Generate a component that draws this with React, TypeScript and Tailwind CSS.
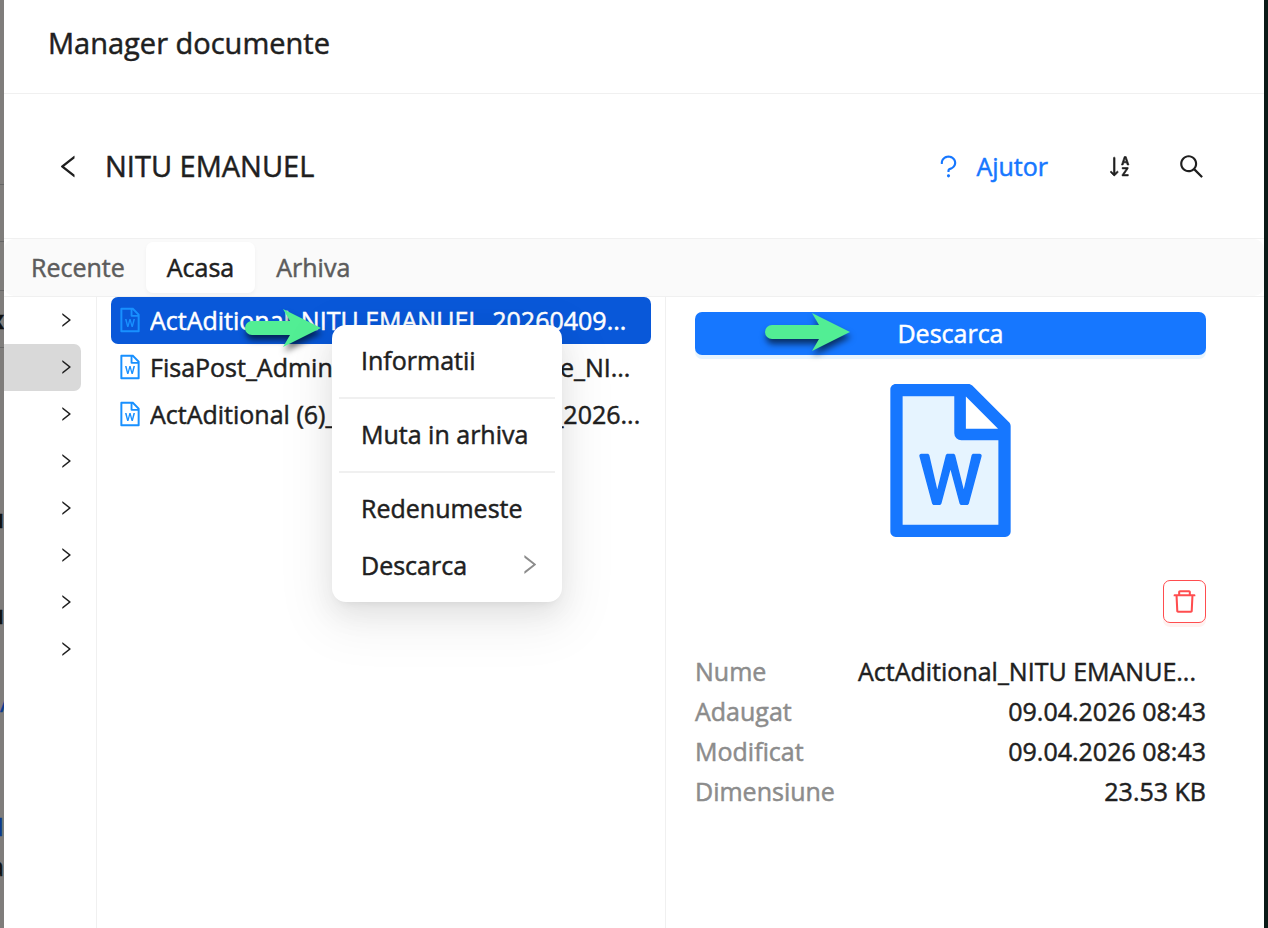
import { useState } from "react";
import {
  AiOutlineDelete,
  AiOutlineFileWord,
  AiOutlineLeft,
  AiOutlineQuestion,
  AiOutlineRight,
  AiOutlineSearch,
  AiTwotoneFileWord,
} from "react-icons/ai";
import { BsSortAlphaDown } from "react-icons/bs";

const tabs = ["Recente", "Acasa", "Arhiva"];

const files = [
  "ActAditional_NITU EMANUEL_20260409...",
  "FisaPost_Administrator baza de date_NI...",
  "ActAditional (6)_NITU EMANUEL (2)_2026...",
];

const folders = [0, 1, 2, 3, 4, 5, 6, 7];

const details = [
  { label: "Nume", value: "ActAditional_NITU EMANUE...", extra: "pr-[10px]" },
  { label: "Adaugat", value: "09.04.2026 08:43", extra: "" },
  { label: "Modificat", value: "09.04.2026 08:43", extra: "" },
  { label: "Dimensiune", value: "23.53 KB", extra: "" },
];

function Pointer({ length }: { length: number }) {
  const back = length - 38;
  return (
    <svg width={length} height="40" viewBox={`0 0 ${length} 40`} className="overflow-visible drop-shadow-[1px_5px_3px_rgba(0,0,0,0.6)]">
      <path d={`M7 13H${back + 7}L${back} 1L${length} 20L${back} 39L${back + 7} 27H7A7 7 0 0 1 7 13Z`} fill="#52ee94" />
    </svg>
  );
}

// the page behind the drawer, only its edge is visible
function Backdrop() {
  return (
    <div aria-hidden="true" className="flex w-1 shrink-0 flex-col overflow-hidden bg-[#7f7d7b] text-[25px] leading-8 font-bold text-[#111]">
      <div className="h-[185px] shrink-0 border-b border-[#666]" />
      <div className="h-[57px] shrink-0 border-b border-[#666]" />
      <div className="h-[49px] shrink-0 border-b border-[#666]" />
      <div className="flex h-[57px] shrink-0 items-center justify-end border-b border-[#666]">x</div>
      <div className="flex h-[334px] shrink-0 flex-col items-end justify-end gap-16 pb-[52px]">
        <span>u</span>
        <span>u</span>
      </div>
      <div className="flex h-20 shrink-0 flex-col gap-1 pt-1 font-medium">
        <span className="text-[#0b3a8f]">/</span>
        <span>|</span>
      </div>
      <div className="flex shrink-0 flex-col items-end gap-2 pt-12 font-medium">
        <span className="text-[#0b3a8f]">I</span>
        <span>a</span>
      </div>
    </div>
  );
}

function ContextMenu() {
  const item = "flex h-[57px] w-full items-center justify-between pb-[2px] pl-[22px] pr-[13px] text-left";
  const line = "mt-2 mb-[7px] h-[2px] border-0 bg-[#f0f0f0]";
  return (
    <div
      role="menu"
      className="absolute top-[28px] left-[221px] z-10 w-[230px] rounded-[14px] bg-white px-[7px] pt-[7px] pb-2 text-[#1f1f1f] shadow-[0_11px_29px_0_rgba(0,0,0,0.08),0_5px_11px_-7px_rgba(0,0,0,0.12),0_16px_50px_14px_rgba(0,0,0,0.05)]"
    >
      <button role="menuitem" className={item}>Informatii</button>
      <hr className={line} />
      <button role="menuitem" className={item}>Muta in arhiva</button>
      <hr className={line} />
      <button role="menuitem" className={item}>Redenumeste</button>
      <button role="menuitem" className={item}>
        Descarca
        <AiOutlineRight className="size-[25px] text-[#8c8c8c]" />
      </button>
    </div>
  );
}

export default function App() {
  const [tab, setTab] = useState("Acasa");
  const [selected, setSelected] = useState(0);

  return (
    <div className="flex min-h-screen bg-white font-['Open_Sans',sans-serif] text-[25px] leading-8 font-medium text-[#1f1f1f] [-webkit-text-stroke-width:0.02em]">
      <Backdrop />

      <main className="flex min-w-0 flex-1 flex-col">
        <header className="flex h-[94px] items-center border-b border-[#f0f0f0] px-11 pb-2">
          <h1 className="text-[29px]">Manager documente</h1>
        </header>

        <div className="flex h-[145px] items-center border-b border-[#f0f0f0] pr-[58px] pl-[50px]">
          <button aria-label="Inapoi">
            <AiOutlineLeft className="size-[29px]" />
          </button>
          <h2 className="ml-[22px] text-[29px]">NITU EMANUEL</h2>
          <div className="ml-auto flex items-center">
            <a href="#ajutor" className="flex items-center gap-[13px] text-[#1677ff]">
              <AiOutlineQuestion className="size-[29px]" />
              Ajutor
            </a>
            <button aria-label="Sorteaza" className="ml-[60px]">
              <BsSortAlphaDown className="size-[25px]" stroke="currentColor" strokeWidth={0.4} />
            </button>
            <button aria-label="Cauta" className="ml-[44px]">
              <AiOutlineSearch className="size-[29px]" />
            </button>
          </div>
        </div>

        <div className="border-b border-[#f0f0f0]">
          <div role="tablist" className="flex rounded-[10px] bg-[#fafafa] py-[3px] pl-[6px]">
            {tabs.map((name) => (
              <button
                key={name}
                role="tab"
                aria-selected={name === tab}
                onClick={() => setTab(name)}
                className={
                  name === tab
                    ? "h-[51px] rounded-[7px] bg-white px-[21px] pb-[2px] shadow-[0_2px_4px_0_rgba(0,0,0,0.04)]"
                    : "h-[51px] px-[21px] pb-[2px] text-[#5c5c5c]"
                }
              >
                {name}
              </button>
            ))}
          </div>
        </div>

        <div className="grid flex-1 grid-cols-[93px_569fr_598fr]">
          <nav aria-label="Foldere" className="border-r border-[#f0f0f0] pr-[15px]">
            {folders.map((f) => (
              <button
                key={f}
                aria-label={`Folder ${f + 1}`}
                className={
                  f === 1
                    ? "flex h-[47px] w-full items-center justify-end rounded-r-[7px] bg-[#d9d9d9] pr-[6px] pb-[2px]"
                    : "flex h-[47px] w-full items-center justify-end pr-[6px] pb-[2px]"
                }
              >
                <AiOutlineRight className="size-[18px]" />
              </button>
            ))}
          </nav>

          <section className="min-w-0 border-r border-[#f0f0f0] px-[14px]">
            <div className="relative">
              {files.map((name, i) => (
                <button
                  key={name}
                  onClick={() => setSelected(i)}
                  className={
                    i === selected
                      ? "flex h-[47px] w-full items-center gap-[6px] rounded-[7px] bg-[#0958d9] pb-[2px] pl-[5px] text-white"
                      : "flex h-[47px] w-full items-center gap-[6px] pb-[2px] pl-[5px]"
                  }
                >
                  <AiOutlineFileWord className="size-[28px] shrink-0 text-[#1890ff]" />
                  <span className="truncate">{name}</span>
                </button>
              ))}
              <ContextMenu />
              <div className="pointer-events-none absolute top-[11px] left-[134px]">
                <Pointer length={76} />
              </div>
            </div>
          </section>

          <aside className="flex min-w-0 flex-col pt-[15px] pr-[58px] pl-[29px]">
            <button className="relative h-[43px] rounded-[7px] bg-[#1677ff] pb-[2px] text-white shadow-[0_4px_0_0_rgba(5,145,255,0.1)]">
              Descarca
              <span className="pointer-events-none absolute top-0 left-[70px]">
                <Pointer length={85} />
              </span>
            </button>
            <AiTwotoneFileWord className="mt-[18px] size-[175px] self-center text-[#1677ff] [&_path[fill]]:fill-[#e6f4ff]" />
            <button
              aria-label="Sterge"
              className="mt-8 flex size-[43px] items-center justify-center self-end rounded-[7px] border border-[#ff4d4f] text-[#ff4d4f] shadow-[0_4px_0_0_rgba(255,38,5,0.06)]"
            >
              <AiOutlineDelete className="size-[29px]" />
            </button>
            <dl className="mt-[28px]">
              {details.map((d) => (
                <div key={d.label} className="flex h-10 items-center justify-between">
                  <dt className="text-[#8c8c8c]">{d.label}</dt>
                  <dd className={d.extra}>{d.value}</dd>
                </div>
              ))}
            </dl>
          </aside>
        </div>
      </main>

      <div className="w-1 shrink-0 bg-[#0a1a17]" />
    </div>
  );
}
